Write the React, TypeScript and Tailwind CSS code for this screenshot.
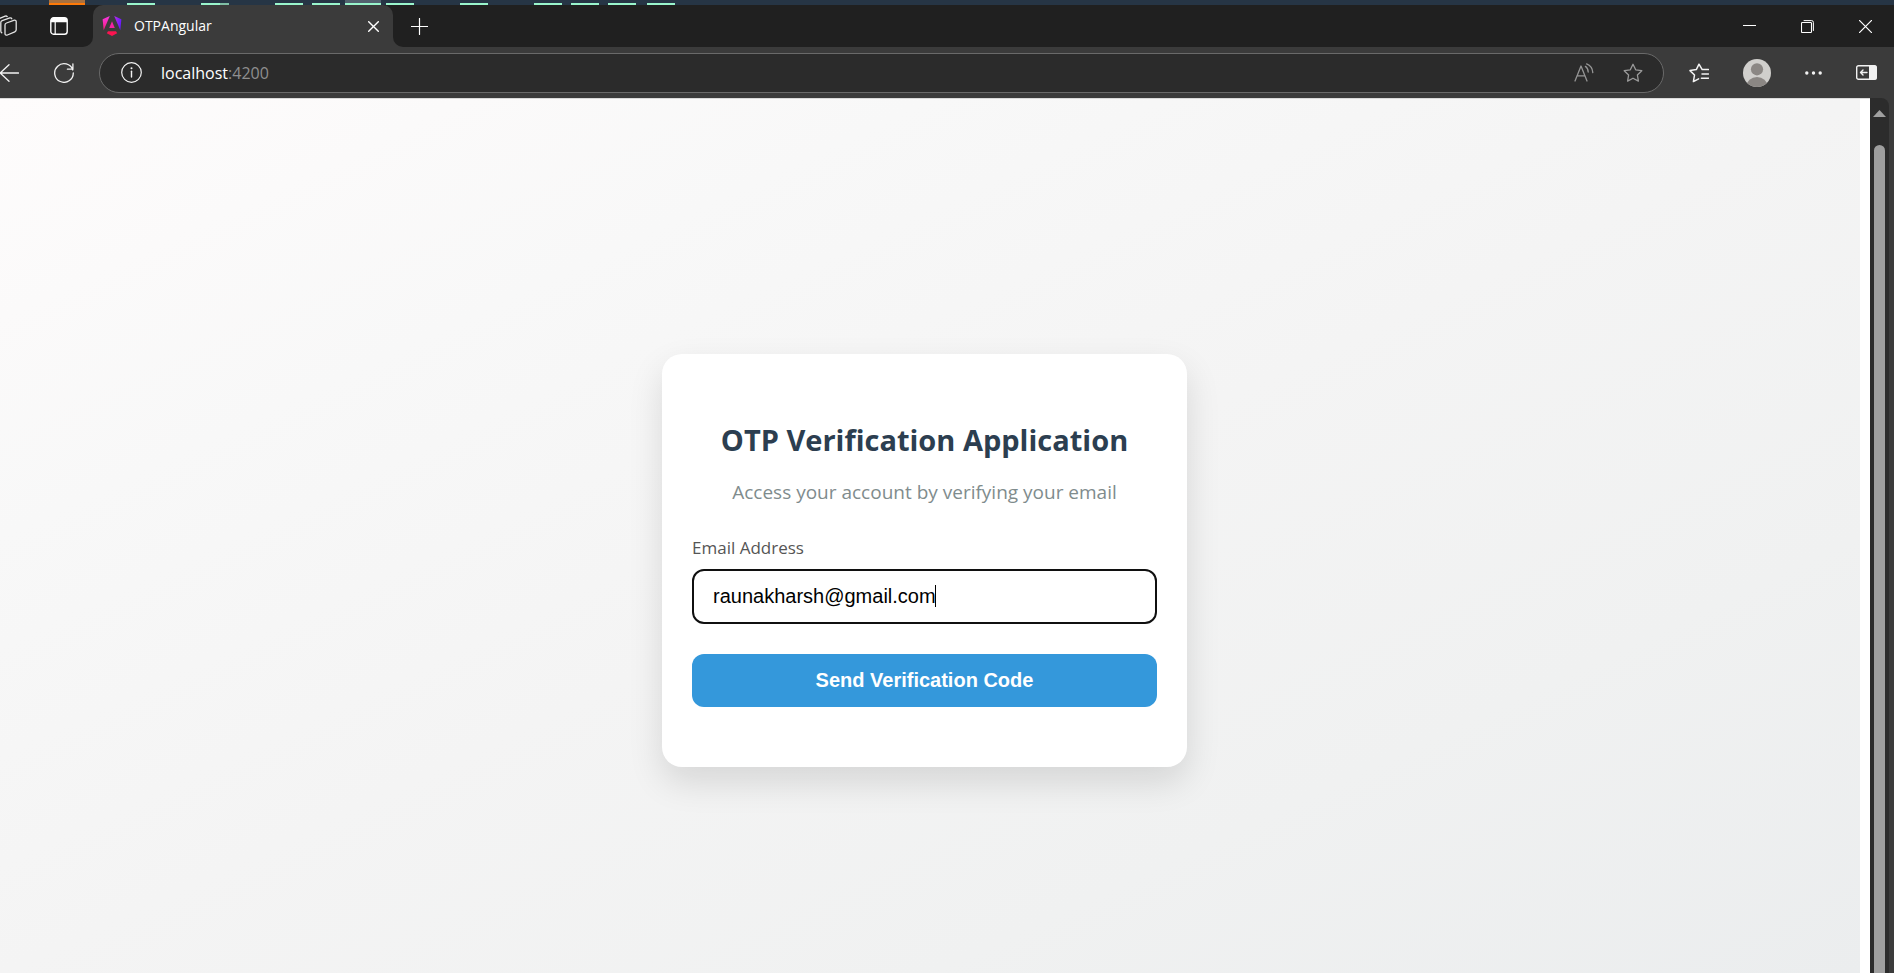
import { useState } from "react";
import type { ReactNode } from "react";

function Icon({ className, box, children }: { className: string; box: string; children: ReactNode }) {
  return (
    <svg className={className} viewBox={box} fill="none" stroke="currentColor" strokeLinecap="round" strokeLinejoin="round" aria-hidden="true">
      {children}
    </svg>
  );
}

const starPath =
  "M10 1.3 12.7 6.8 18.8 7.7 14.4 12 15.4 18.1 10 15.2 4.6 18.1 5.6 12 1.2 7.7 7.3 6.8Z";

function TaskbarEdge() {
  return (
    <div className="flex h-[5px] shrink-0 items-end overflow-hidden bg-[#263545]">
      <span className="ml-[49px] h-[5px] w-9 shrink-0 border-b-2 border-[#ff7a08] bg-[#a9713f]" />
      <span className="ml-[42px] h-0.5 w-7 shrink-0 bg-[#99f5cc]" />
      <span className="ml-[46px] h-0.5 w-[19px] shrink-0 bg-[#99f5cc]" />
      <span className="h-0.5 w-[9px] shrink-0 bg-[#7fbfa5]" />
      <span className="ml-[46px] h-0.5 w-7 shrink-0 bg-[#99f5cc]" />
      <span className="ml-[9px] h-0.5 w-7 shrink-0 bg-[#99f5cc]" />
      <span className="ml-[5px] h-[5px] w-9 shrink-0 border-b-2 border-[#99f5cc] bg-[#53626f]" />
      <span className="ml-[5px] h-0.5 w-7 shrink-0 bg-[#99f5cc]" />
      <span className="ml-[46px] h-0.5 w-7 shrink-0 bg-[#99f5cc]" />
      <span className="ml-[46px] h-0.5 w-7 shrink-0 bg-[#99f5cc]" />
      <span className="ml-[9px] h-0.5 w-7 shrink-0 bg-[#99f5cc]" />
      <span className="ml-[9px] h-0.5 w-7 shrink-0 bg-[#99f5cc]" />
      <span className="ml-[11px] h-0.5 w-7 shrink-0 bg-[#99f5cc]" />
    </div>
  );
}

function AngularLogo() {
  return (
    <svg className="h-5 w-5 shrink-0" viewBox="0 0 20 20" aria-hidden="true">
      <defs>
        <linearGradient id="ng" x1="0" y1="0" x2="1" y2="0.3">
          <stop offset="0" stopColor="#b92be8" />
          <stop offset="1" stopColor="#6a1bff" />
        </linearGradient>
        <linearGradient id="ngl" x1="0" y1="0" x2="0" y2="1">
          <stop offset="0" stopColor="#f637e3" />
          <stop offset="1" stopColor="#f81c7c" />
        </linearGradient>
      </defs>
      <path d="M7.8 0 0.6 3.2 1.7 14.3Z" fill="url(#ngl)" />
      <path d="M12.2 0 19.4 3.2 18.3 14.3Z" fill="url(#ng)" />
      <path d="M10 5.2 12.8 12H7.2Z" fill="#f322a4" />
      <path d="M6 15.3H14L15.2 17.2 10 20 4.8 17.2Z" fill="#fb1450" />
    </svg>
  );
}

function TitleBar() {
  return (
    <div className="flex h-[42px] shrink-0 bg-[#3b3b3b] text-white">
      <div className="flex w-[93px] shrink-0 items-center rounded-br-[10px] bg-[#202020]">
        <button aria-label="Workspaces" className="-ml-[5px] mr-[33px]">
          <Icon className="h-[22px] w-[22px]" box="0 0 22 22">
            <g stroke="#e4e4e4" strokeWidth="1.3">
              <path d="M11.5 8 19.4 5.2Q21.2 5 21.2 6.6V14.8Q21.2 16.2 19.8 16.8L12.4 20Q10.4 20.6 10 18.8V10Q10 8.6 11.5 8Z" />
              <path d="M6.8 17.8Q5.8 17.4 5.8 16V7.6Q5.8 6.2 7.2 5.6L14.8 2.9Q16.4 2.6 16.8 3.8" />
              <path d="M2.2 15.4Q1.6 15 1.6 13.6V6Q1.6 4.6 3 4L10.2 1.1Q11.6 0.8 12.2 1.6" />
            </g>
          </Icon>
        </button>
        <button aria-label="Tab actions menu">
          <Icon className="h-[18px] w-[18px]" box="0 0 18 18">
            <rect x="0.8" y="0.8" width="16.4" height="16.4" rx="2.8" strokeWidth="1.4" />
            <path d="M1 5.2V3Q1 1 3 1H15Q17 1 17 3V5.2Z" fill="currentColor" stroke="none" />
            <path d="M5.2 5V17" strokeWidth="1.2" />
          </Icon>
        </button>
      </div>
      <div className="flex w-[300px] shrink-0 bg-[#202020]">
        <div className="flex grow items-center rounded-t-[10px] bg-[#3b3b3b] pl-[9px] pr-3.5">
          <AngularLogo />
          <span className="ml-3 grow text-[14px] leading-5">OTPAngular</span>
          <button aria-label="Close tab">
            <Icon className="h-[11px] w-[11px]" box="0 0 11 11">
              <path d="M0.7 0.7 10.3 10.3M10.3 0.7 0.7 10.3" strokeWidth="1.4" />
            </Icon>
          </button>
        </div>
      </div>
      <div className="flex grow items-center rounded-bl-[10px] bg-[#202020] pl-[18px] pr-[22px]">
        <button aria-label="New tab" className="mr-auto">
          <Icon className="h-[17px] w-[17px]" box="0 0 17 17">
            <path d="M0.5 8.5H16.5M8.5 0.5V16.5" strokeWidth="1.2" />
          </Icon>
        </button>
        <div className="flex items-center gap-[45px]">
          <button aria-label="Minimize">
            <Icon className="h-[13px] w-[13px]" box="0 0 13 13">
              <path d="M0 5.5H13" strokeLinecap="butt" />
            </Icon>
          </button>
          <button aria-label="Restore">
            <Icon className="h-[13px] w-[13px]" box="0 0 13 13">
              <rect x="0.5" y="2.5" width="10" height="10" rx="0.8" strokeWidth="1.1" />
              <path d="M3 0.6H10.6Q12.4 0.6 12.4 2.4V10.5" strokeWidth="1" />
            </Icon>
          </button>
          <button aria-label="Close window">
            <Icon className="h-[13px] w-[13px]" box="0 0 13 13">
              <path d="M0.4 0.4 12.6 12.6M12.6 0.4 0.4 12.6" strokeWidth="1.2" />
            </Icon>
          </button>
        </div>
      </div>
    </div>
  );
}

function ToolBar() {
  return (
    <div className="flex h-[51px] shrink-0 items-center bg-[#3b3b3b] pr-[17px] text-[#f2f2f2]">
      <button aria-label="Back" className="mr-[35px]">
        <Icon className="h-[18px] w-[19px]" box="0 0 19 18">
          <path d="M0 9H18.5M9 0.7 0.2 9 9 17.3" strokeWidth="1.3" />
        </Icon>
      </button>
      <button aria-label="Refresh" className="mr-[25px]">
        <Icon className="h-5 w-5" box="0 0 20 20">
          <path d="M18.8 7A9.3 9.3 0 1 0 19.3 10M18.9 0.8V6.2H13.4" strokeWidth="1.3" />
        </Icon>
      </button>
      <div className="flex h-10 grow items-center rounded-full border border-[#6a6a6a] bg-[#2b2b2b] pl-[21px] pr-5">
        <button aria-label="View site information">
          <Icon className="h-[21px] w-[21px]" box="0 0 21 21">
            <circle cx="10.5" cy="10.5" r="9.8" strokeWidth="1.2" />
            <path d="M10.5 9.2V15" strokeWidth="1.4" />
            <circle cx="10.5" cy="6.2" r="1" fill="currentColor" stroke="none" />
          </Icon>
        </button>
        <span className="ml-[19px] grow text-[16px] leading-6 text-white">
          localhost<span className="text-[#8f8f8f]">:4200</span>
        </span>
        <button aria-label="Read aloud" className="mr-[29px] text-[#959595]">
          <Icon className="h-[19px] w-5" box="0 0 20 19">
            <path d="M1 18 7 3 13 18M3.2 12.8H10.8" strokeWidth="1.3" />
            <path d="M11.4 3.4Q14 5 14.2 9M12.6 0.9Q18.4 3.2 18.8 9.6" strokeWidth="1.3" />
          </Icon>
        </button>
        <button aria-label="Add to favorites" className="text-[#9a9a9a]">
          <Icon className="h-5 w-5" box="0 0 20 20">
            <path d={starPath} strokeWidth="1.3" />
          </Icon>
        </button>
      </div>
      <button aria-label="Favorites" className="ml-[25px]">
        <Icon className="h-5 w-5" box="0 0 20 20">
          <path d="M19.5 6.6H13.2L10 1.2 7.3 6.6 1 7.6 5.5 12 4.4 18.6 9.6 15.8M13 11H19.5M12.4 15.2H19.5" strokeWidth="1.5" />
        </Icon>
      </button>
      <button aria-label="Profile" className="ml-[34px]">
        <svg className="h-7 w-7" viewBox="0 0 28 28" aria-hidden="true">
          <defs>
            <clipPath id="avatar">
              <circle cx="14" cy="14" r="14" />
            </clipPath>
          </defs>
          <g clipPath="url(#avatar)">
            <rect width="28" height="28" fill="#d0cfcc" />
            <circle cx="14" cy="10.3" r="6.1" fill="#8b8784" />
            <ellipse cx="14" cy="27" rx="10.5" ry="9" fill="#8b8784" />
          </g>
        </svg>
      </button>
      <button aria-label="Settings and more" className="ml-[34px]">
        <svg className="h-1 w-[17px]" viewBox="0 0 17 4" fill="currentColor" aria-hidden="true">
          <circle cx="1.8" cy="2" r="1.7" />
          <circle cx="8.5" cy="2" r="1.7" />
          <circle cx="15.2" cy="2" r="1.7" />
        </svg>
      </button>
      <button aria-label="Open sidebar" className="ml-[34px]">
        <Icon className="h-[15px] w-[21px]" box="0 0 21 15">
          <rect x="0.7" y="0.7" width="19.6" height="13.6" rx="1.8" strokeWidth="1.4" />
          <path d="M13 0.5H19Q20.5 0.5 20.5 2V13Q20.5 14.5 19 14.5H13Z" fill="currentColor" stroke="none" />
          <path d="M4.5 7.5H11M7 5 4.5 7.5 7 10" strokeWidth="1.4" />
        </Icon>
      </button>
    </div>
  );
}

function OtpCard() {
  const [email, setEmail] = useState("raunakharsh@gmail.com");
  return (
    <form
      onSubmit={(event) => event.preventDefault()}
      className="flex w-full max-w-[525px] flex-col rounded-[20px] bg-white px-[30px] pb-[60px] pt-[66px] shadow-[0_15px_35px_rgba(0,0,0,0.12)]"
    >
      <h1 className="text-center text-[29px] font-bold leading-10 text-[#2c3e50]">OTP Verification Application</h1>
      <p className="mt-5 text-center text-[19px] leading-6 text-[#7f8c8d]">Access your account by verifying your email</p>
      <label htmlFor="email" className="mt-8 text-[17px] leading-6 text-[#555555]">
        Email Address
      </label>
      <div className="relative mt-[9px] font-['Liberation_Sans',sans-serif]">
        <input
          id="email"
          type="email"
          value={email}
          onChange={(event) => setEmail(event.target.value)}
          className="block h-[55px] w-full rounded-[12px] border-2 border-[#101010] bg-white px-[19px] text-[20px] leading-6 text-black outline-none"
        />
        <span className="absolute left-[243px] top-4 h-[22px] w-px bg-black" />
      </div>
      <button
        type="submit"
        className="mt-[30px] h-[53px] rounded-[12px] bg-[#3498db] font-['Liberation_Sans',sans-serif] text-[20px] font-bold leading-6 text-white"
      >
        Send Verification Code
      </button>
    </form>
  );
}

export default function App() {
  return (
    <div className="flex h-screen flex-col overflow-hidden bg-[#3b3b3b] font-['Segoe_UI','Open_Sans','Noto_Sans',sans-serif]">
      <TaskbarEdge />
      <TitleBar />
      <ToolBar />
      <div className="flex min-h-0 grow pr-[5px]">
        <div className="flex min-w-0 grow border-t border-[#dadada] bg-white pr-2.5">
          <main className="flex grow items-center justify-center bg-[linear-gradient(to_bottom_right,#fefcfc_0%,#f8f8f8_25%,#f4f4f4_50%,#f0f1f1_75%,#ebedee_100%)] pr-[11px] pt-12">
            <OtpCard />
          </main>
        </div>
        <div className="flex w-[19px] shrink-0 flex-col items-center rounded-tr-[8px] bg-[#2c2c2c] pt-3">
          <svg className="h-[7px] w-[13px] shrink-0" viewBox="0 0 13 7" aria-hidden="true">
            <path d="M6.5 0 13 7H0Z" fill="#a0a0a0" />
          </svg>
          <div className="mt-7 w-[11px] grow rounded-t-full bg-[#9f9f9f]" />
        </div>
      </div>
    </div>
  );
}
